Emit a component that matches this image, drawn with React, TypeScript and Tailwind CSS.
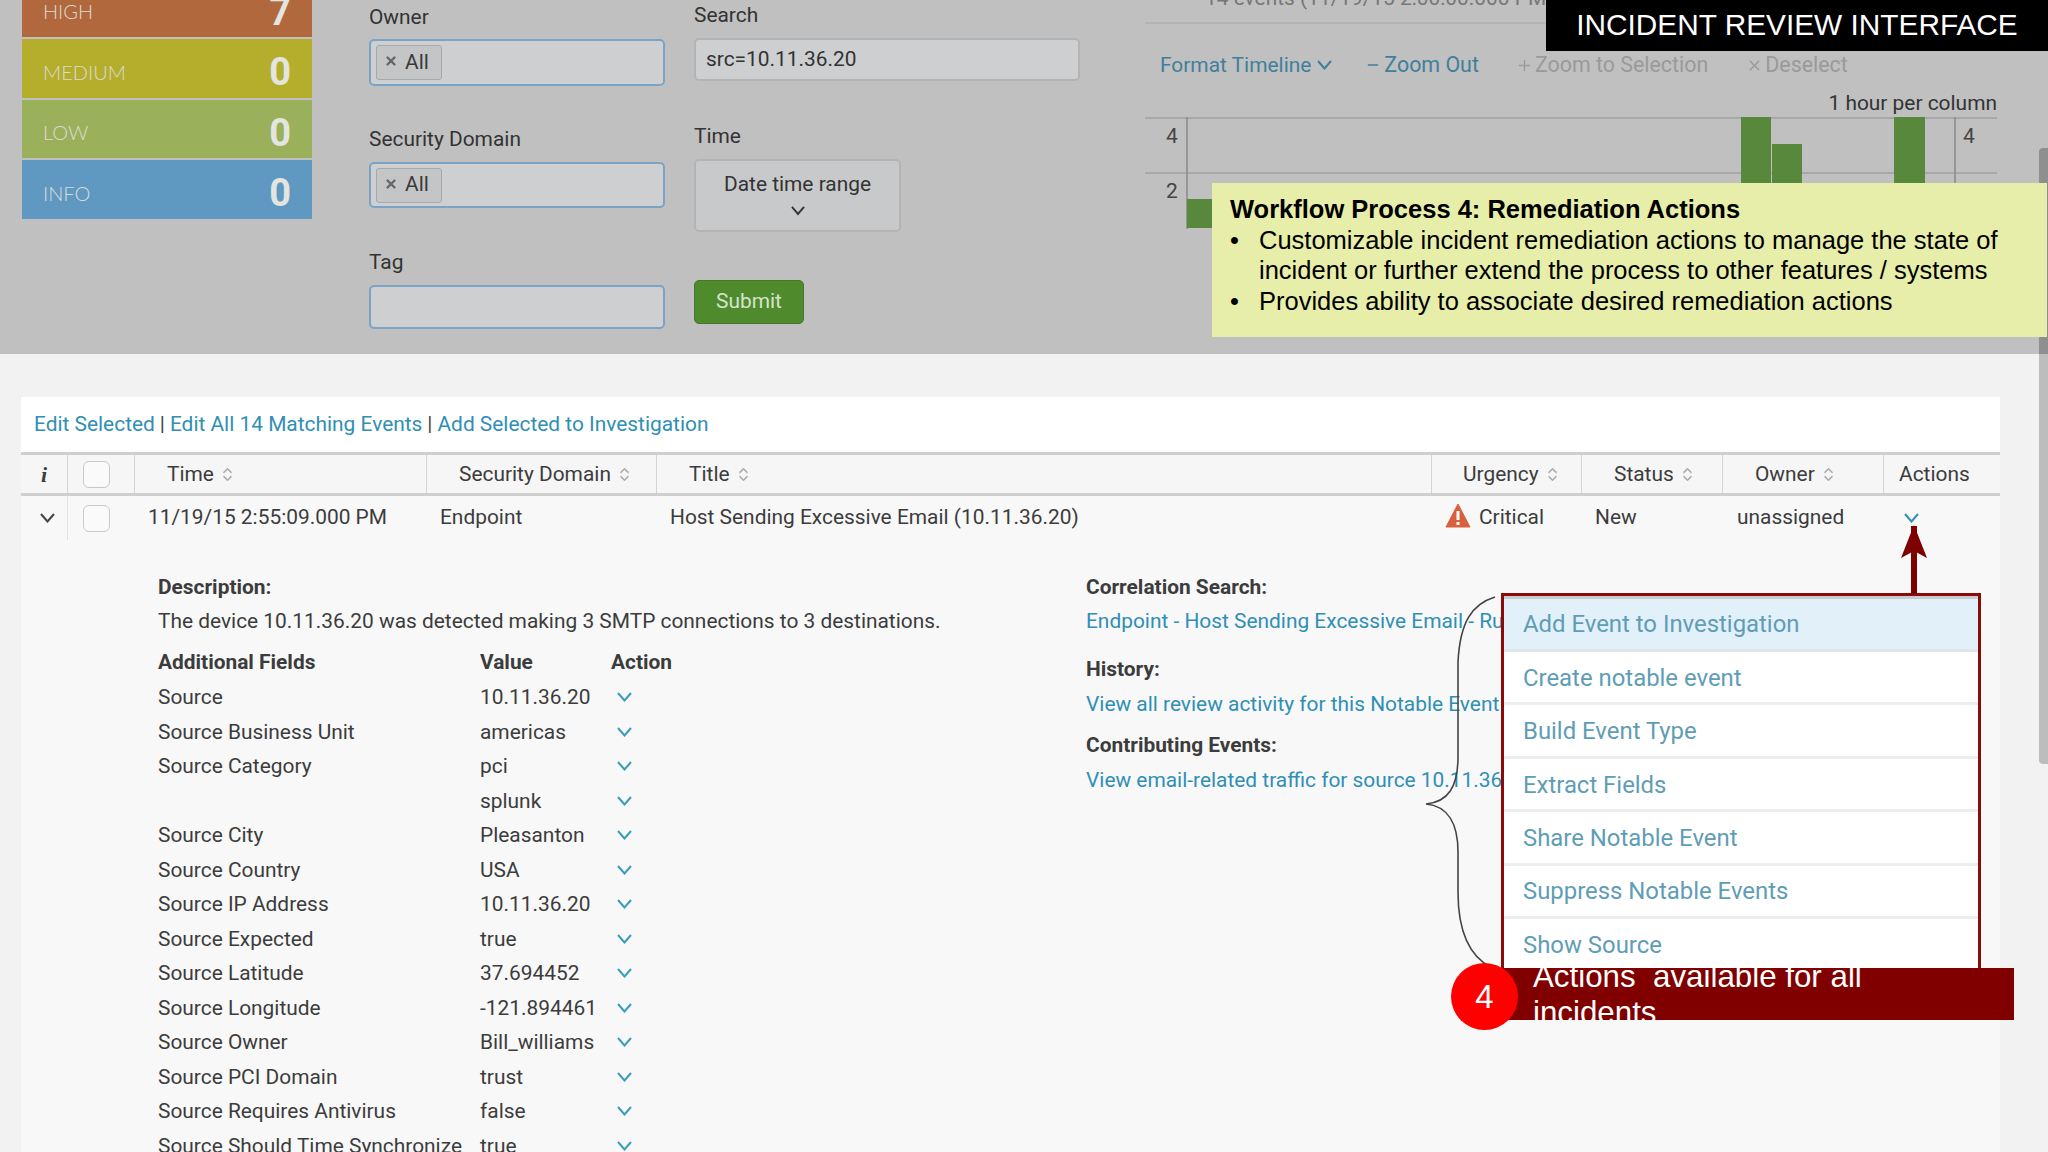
import { ChevronsUpDown, X, Minus, Plus } from 'lucide-react';

const severities = [
  { label: 'HIGH', value: '7', bg: 'bg-[#b1683c]', box: 'h-[58px] -mt-[21px]' },
  { label: 'MEDIUM', value: '0', bg: 'bg-[#b5ad2c]', box: 'h-[59px] mt-[2px]' },
  { label: 'LOW', value: '0', bg: 'bg-[#9bb05b]', box: 'h-[58px] mt-[2px]' },
  { label: 'INFO', value: '0', bg: 'bg-[#5f98c1]', box: 'h-[59px] mt-[2px]' },
];

const columns = [
  { label: 'Time', pad: 'pl-[32px]' },
  { label: 'Security Domain', pad: 'pl-[32px]' },
  { label: 'Title', pad: 'pl-[32px]' },
  { label: 'Urgency', pad: 'pl-[31px]' },
  { label: 'Status', pad: 'pl-[32px]' },
  { label: 'Owner', pad: 'pl-[32px]' },
];

const fields = [
  ['Source', '10.11.36.20'],
  ['Source Business Unit', 'americas'],
  ['Source Category', 'pci'],
  ['', 'splunk'],
  ['Source City', 'Pleasanton'],
  ['Source Country', 'USA'],
  ['Source IP Address', '10.11.36.20'],
  ['Source Expected', 'true'],
  ['Source Latitude', '37.694452'],
  ['Source Longitude', '-121.894461'],
  ['Source Owner', 'Bill_williams'],
  ['Source PCI Domain', 'trust'],
  ['Source Requires Antivirus', 'false'],
  ['Source Should Time Synchronize', 'true'],
];

const menuItems = [
  'Create notable event',
  'Build Event Type',
  'Extract Fields',
  'Share Notable Event',
  'Suppress Notable Events',
  'Show Source',
];

const gridCols = 'grid grid-cols-[47px_67px_292px_230px_775px_150px_141px_161px_116px]';

// flat V used everywhere in the Splunk UI, wider than lucide's
const Chev = ({ className, w = 15 }: { className?: string; w?: number }) => (
  <svg width={w} height={w * 0.67} viewBox="0 0 15 10" fill="none" stroke="currentColor" strokeWidth="2" className={className}>
    <path d="M1 1 L7.5 8.5 L14 1" />
  </svg>
);

const Token = () => (
  <div className="ml-[5px] flex h-[35px] w-[66px] items-center gap-[7px] rounded-[3px] border border-[#a8a8a8] bg-[#c4c5c6] pl-[7px] text-[#3a3a3a]">
    <X className="-mt-[3px] h-[14px] w-[14px] text-[#666]" strokeWidth={4} />
    <span>All</span>
  </div>
);

const Check = () => <div className="h-[27px] w-[27px] rounded-[6px] border border-[#c9c9c9] bg-[#fafafa]" />;

const App = () => {
  return (
    <div className="relative h-[1152px] w-[2048px] overflow-hidden bg-[#f2f2f3] font-[Roboto,sans-serif] text-[20.9px] text-[#3c3c3c]">
      {/* Top filter panel */}
      <div className="flex h-[354px] overflow-hidden bg-[#c0c0c0] pl-[22px]">
        <div className="w-[290px]">
          {severities.map((s) => (
            <div key={s.label} className={`flex items-center justify-between pl-[21px] pr-[21px] pt-[8px] ${s.bg} ${s.box}`}>
              <span className="-mt-[2px] font-[Lato,sans-serif] text-[20px] font-light text-[#dcdcd2]">{s.label}</span>
              <span className="text-[38px] font-bold text-[#e3e5e0]">{s.value}</span>
            </div>
          ))}
        </div>

        <div className="ml-[57px] w-[296px] text-[#333]">
          <div className="h-[34px] leading-[34px]">Owner</div>
          <div className="mt-[5px] flex h-[47px] items-center rounded-[5px] border-2 border-[#7ba3c6] bg-[#cdcfd0]"><Token /></div>
          <div className="mt-[36px] h-[34px] leading-[34px]">Security Domain</div>
          <div className="mt-[6px] flex h-[46px] items-center rounded-[5px] border-2 border-[#7ba3c6] bg-[#cdcfd0]"><Token /></div>
          <div className="mt-[37px] h-[34px] leading-[34px]">Tag</div>
          <div className="mt-[6px] h-[44px] rounded-[5px] border-2 border-[#7ba3c6] bg-[#cdcfd0]" />
        </div>

        <div className="ml-[29px] w-[386px] text-[#333]">
          <div className="h-[30px] leading-[30px]">Search</div>
          <div className="mt-[8px] flex h-[43px] items-center rounded-[5px] border-2 border-[#b4b4b4] bg-[#cdcfd0] pl-[10px] pt-[1px]">src=10.11.36.20</div>
          <div className="mt-[40px] h-[30px] leading-[30px]">Time</div>
          <div className="mt-[8px] flex h-[73px] w-[207px] flex-col items-center justify-center rounded-[5px] border-2 border-[#b4b4b4] bg-[#c8c9ca] pb-[6px]">
            <span>Date time range</span>
            <Chev className="mt-[6px] text-[#333]" w={14} />
          </div>
          <div className="mt-[48px] flex h-[44px] w-[110px] items-center justify-center rounded-[5px] border border-[#44782a] bg-[#4f8a2d] text-[#d5e3ca]">Submit</div>
        </div>

        <div className="ml-[65px] w-[852px]">
          <div className="-mt-[17px] h-[41px] whitespace-nowrap border-b-2 border-[#b4b4b4] pl-[60px] text-[#777]">14 events (11/19/15 2:00:00.000 PM to 11/19/15 3:00:00.000 PM)</div>
          <div className="mt-[26px] flex items-center pl-[15px] leading-[30px]">
            <span className="flex items-center gap-[6px] text-[#3f7f9c]">Format Timeline <Chev w={15} /></span>
            <span className="ml-[33px] flex items-center gap-[3px] text-[21.4px] text-[#3f7f9c]"><Minus className="h-[16px] w-[16px]" />Zoom Out</span>
            <span className="ml-[37px] flex items-center gap-[2px] text-[21.4px] text-[#9a9a9a]"><Plus className="h-[17px] w-[17px]" />Zoom to Selection</span>
            <span className="ml-[38px] flex items-center gap-[2px] text-[21.4px] text-[#9a9a9a]"><X className="h-[17px] w-[17px]" />Deselect</span>
          </div>
          <div className="mt-[8px] h-[30px] text-right leading-[30px] text-[#333]">1 hour per column</div>
          <svg width="852" height="120" className="-mt-[1px] block">
            <line x1="0" y1="1" x2="852" y2="1" stroke="#a8a8a8" strokeWidth="2" />
            <line x1="0" y1="56" x2="852" y2="56" stroke="#a8a8a8" strokeWidth="2" />
            <line x1="42" y1="0" x2="42" y2="112" stroke="#8a8a8a" strokeWidth="1.5" />
            <line x1="810" y1="0" x2="810" y2="112" stroke="#8a8a8a" strokeWidth="1.5" />
            <rect x="596" y="0" width="30" height="112" fill="#58883c" />
            <rect x="627" y="27" width="30" height="85" fill="#58883c" />
            <rect x="749" y="0" width="31" height="112" fill="#58883c" />
            <rect x="42" y="82" width="30" height="29" fill="#58883c" />
            <text x="21" y="26" fontSize="21" fill="#444">4</text>
            <text x="21" y="81" fontSize="21" fill="#444">2</text>
            <text x="818" y="26" fontSize="21" fill="#444">4</text>
          </svg>
        </div>
      </div>

      {/* Event table */}
      <div className="ml-[21px] mt-[43px] h-[755px] w-[1979px] overflow-hidden bg-[#f8f8f9]">
        <div className="flex h-[55px] items-center bg-white pl-[13px] text-[#2f8fb5]">
          <span>Edit Selected</span>
          <span className="mx-[5px] text-[#444]">|</span>
          <span>Edit All 14 Matching Events</span>
          <span className="mx-[5px] text-[#444]">|</span>
          <span>Add Selected to Investigation</span>
        </div>

        <div className={`${gridCols} h-[44px] items-stretch border-y-[3px] border-[#cfcfcf] bg-[#f6f6f7]`}>
          <div className="flex items-center justify-center border-r border-[#d4d4d4] font-[Liberation_Serif,serif] text-[22px] font-bold italic">i</div>
          <div className="flex items-center border-r border-[#d4d4d4] pl-[15px]"><Check /></div>
          {columns.map((c) => (
            <div key={c.label} className={`flex items-center gap-[5px] border-r border-[#d4d4d4] pt-[1px] ${c.pad}`}>
              {c.label}
              <ChevronsUpDown className="h-[17px] w-[17px] text-[#aaa]" />
            </div>
          ))}
          <div className="flex items-center pl-[15px] pt-[1px]">Actions</div>
        </div>

        <div className={`${gridCols} h-[44px] items-center`}>
          <div className="flex h-full items-center justify-center border-r border-[#e2e2e2] pl-[6px]"><Chev className="text-[#444]" /></div>
          <div className="flex items-center pl-[15px]"><Check /></div>
          <div className="pl-[13px]">11/19/15 2:55:09.000 PM</div>
          <div className="pl-[13px]">Endpoint</div>
          <div className="pl-[13px]">Host Sending Excessive Email (10.11.36.20)</div>
          <div className="flex items-center gap-[8px] pl-[13px]">
            <svg width="26" height="25" viewBox="0 0 26 25" className="-mt-[4px]">
              <path d="M13 1 L25 24 H1 Z" fill="#d9603c" stroke="#d9603c" strokeLinejoin="round" />
              <rect x="11.5" y="8" width="3" height="9" fill="#fff" />
              <rect x="11.5" y="19" width="3" height="3" fill="#fff" />
            </svg>
            Critical
          </div>
          <div className="pl-[13px]">New</div>
          <div className="pl-[14px]">unassigned</div>
          <div className="pl-[20px]"><Chev className="text-[#2f8fb5]" /></div>
        </div>

        <div className="flex pl-[137px] pt-[30px] leading-[34px]">
          <div className="w-[928px]">
            <div className="font-bold">Description:</div>
            <div>The device 10.11.36.20 was detected making 3 SMTP connections to 3 destinations.</div>
            <div className="mt-[7px] grid grid-cols-[322px_131px_auto] font-bold">
              <div>Additional Fields</div>
              <div>Value</div>
              <div>Action</div>
            </div>
            <div className="mt-[1px]">
              {fields.map(([name, value], i) => (
                <div key={i} className="grid h-[34.5px] grid-cols-[322px_131px_auto] items-center">
                  <div className="whitespace-nowrap">{name}</div>
                  <div>{value}</div>
                  <Chev className="ml-[6px] text-[#3a9dbd]" />
                </div>
              ))}
            </div>
          </div>
          <div className="whitespace-nowrap">
            <div className="font-bold">Correlation Search:</div>
            <div className="text-[#2f8fb5]">Endpoint - Host Sending Excessive Email - Rule</div>
            <div className="mt-[14px] font-bold">History:</div>
            <div className="mt-[1px] text-[#2f8fb5]">View all review activity for this Notable Event</div>
            <div className="mt-[7px] font-bold">Contributing Events:</div>
            <div className="mt-[1px] text-[#2f8fb5]">View email-related traffic for source 10.11.36.20</div>
          </div>
        </div>
      </div>

      {/* Scrollbar, dimmed where the grey panel sits behind it */}
      <div className="absolute right-0 top-[148px] w-[9px] overflow-hidden rounded-l-[4px] bg-[#bdbdbd]">
        <div className="h-[206px] bg-[#8f8f8f]" />
        <div className="h-[410px]" />
      </div>

      {/* Slide annotations */}
      <div className="absolute right-0 top-0 flex h-[51px] w-[502px] items-center justify-center bg-black font-[Liberation_Sans,sans-serif] text-[29.8px] text-white">
        INCIDENT REVIEW INTERFACE
      </div>

      <div className="absolute left-[1212px] top-[183px] h-[154px] w-[835px] bg-[#e7eea9] pl-[18px] pt-[11px] font-[Liberation_Sans,sans-serif] text-[25.5px] leading-[30.5px] text-black">
        <div className="font-bold">Workflow Process 4: Remediation Actions</div>
        <div className="flex"><span className="w-[29px]">•</span><span>Customizable incident remediation actions to manage the state of<br />incident or further extend the process to other features / systems</span></div>
        <div className="flex"><span className="w-[29px]">•</span><span>Provides ability to associate desired remediation actions</span></div>
      </div>

      <div className="absolute left-[1501px] top-[593px] h-[377px] w-[480px] overflow-hidden border-[3px] border-b-0 border-[#8b0a0a] bg-white text-[23.9px] text-[#5f9db6]">
        <div className="flex h-[56px] items-center border-y-[3px] border-t-[#c9cdd2] border-b-[#dfe6ea] bg-[#e1f0f9] pl-[19px] pt-[2px]">Add Event to Investigation</div>
        {menuItems.map((item) => (
          <div key={item} className="flex h-[53.4px] items-center border-b-[3px] border-[#eeeeef] pl-[19px] pt-[3px]">{item}</div>
        ))}
      </div>

      <svg width="40" height="72" className="absolute left-[1894px] top-[524px]">
        <path d="M20 2 L20 70" stroke="#7f0000" strokeWidth="6" fill="none" />
        <path d="M20 1 L33 34 L20 27 L7 34 Z" fill="#7f0000" />
      </svg>

      <svg width="80" height="380" className="absolute left-[1420px] top-[592px]">
        <path d="M75 5 C52 12 40 30 38 70 L38 165 C38 195 28 210 6 212 C28 214 38 232 38 260 L38 300 C38 340 50 365 72 376" fill="none" stroke="#444" strokeWidth="1.6" />
      </svg>

      <div className="absolute left-[1500px] top-[968px] h-[52px] w-[514px] overflow-hidden bg-[#800000] pl-[33px] font-[Liberation_Sans,sans-serif] text-[31.3px] leading-[36px] text-white">
        <div className="-mt-[9px] w-[400px] whitespace-pre-wrap">Actions  available for all incidents</div>
      </div>

      <div className="absolute left-[1451px] top-[963px] flex h-[67px] w-[67px] items-center justify-center rounded-full bg-[#ff0000] font-[Liberation_Sans,sans-serif] text-[33px] text-white">4</div>
    </div>
  );
};

export default App;
